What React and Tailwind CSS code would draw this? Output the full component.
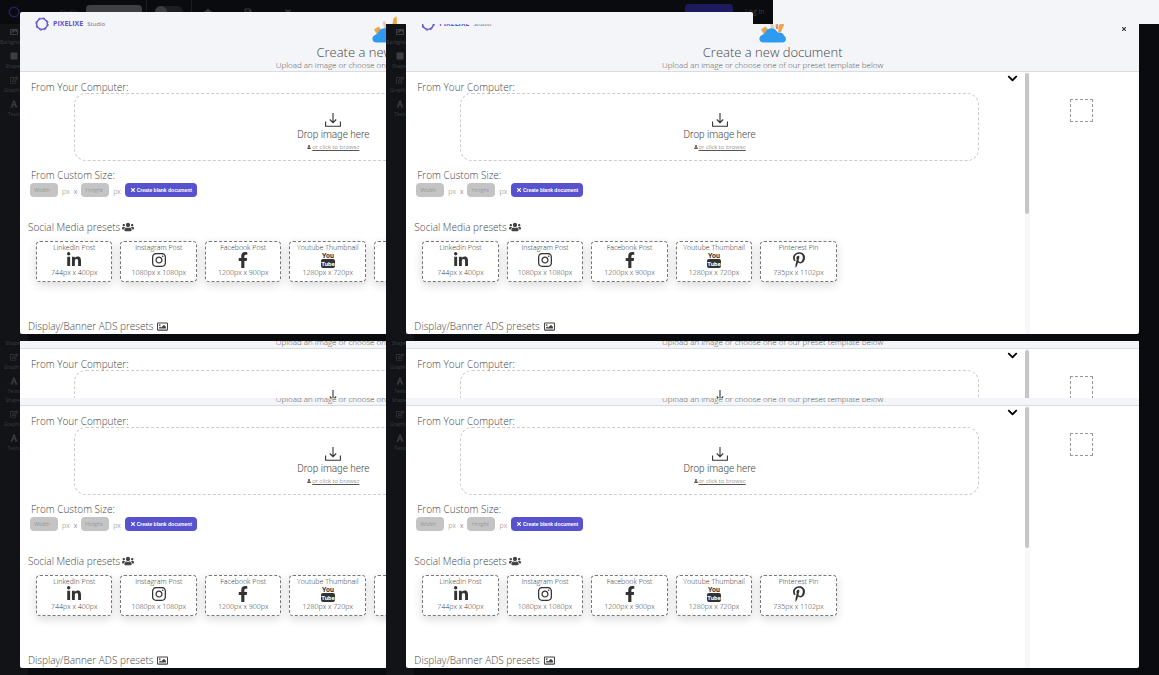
import React from "react";
import {
  FaChevronDown,
  FaFacebookF,
  FaFont,
  FaImage,
  FaInstagram,
  FaLinkedinIn,
  FaPinterestP,
  FaRegEdit,
  FaRegImage,
  FaSave,
  FaSquare,
  FaStar,
  FaTimes,
  FaUser,
  FaUsers,
} from "react-icons/fa";

function YoutubeIcon({ className }) {
  return (
    <svg viewBox="0 0 16 16" className={className} fill="currentColor" aria-hidden="true">
      <text x="8" y="6" textAnchor="middle" fontSize="7" className="font-[Roboto] font-bold">
        You
      </text>
      <rect x="1" y="7" width="14" height="9" rx="2" />
      <text x="8" y="14" textAnchor="middle" fontSize="6" fill="#fff" className="font-[Roboto] font-bold">
        Tube
      </text>
    </svg>
  );
}

function LogoIcon({ className }) {
  return (
    <svg viewBox="0 0 14 14" className={className} fill="none" stroke="currentColor" aria-hidden="true">
      <circle cx="7" cy="7" r="5.4" strokeWidth="1.4" />
      <circle cx="7" cy="7" r="6.2" strokeWidth="1" strokeDasharray="2.4 2.47" />
    </svg>
  );
}

function CloudIcon() {
  return (
    <svg viewBox="0 0 28 28" className="h-7 w-7" aria-hidden="true">
      <path d="M2 14.5l4.5-3 3.5 4-5 4z" fill="#e8a54b" />
      <path d="M10.500 7l2.500-1 2.500 7-3 1z" fill="#d7cdbb" />
      <path d="M16.500 9.500l2.500-.5.5 5-2.500 0z" fill="#e08a62" />
      <path d="M21.500 3.500l3-2.500.5 9-3.500 8-2.500-1.500z" fill="#f0a548" />
      <path
        d="M4.500 27.500c-5 0-5.500-6.500-1-7.800 1.300-.5 2.200-1.200 3-2.700 2-4.500 8.500-4.800 10.700-1.500 1 1.600 2.200 2.300 3.800 2.200 2.500 0 3.500 1.300 4 3 3 1.300 2.500 6.800-1.500 6.800z"
        fill="#2f9bf0"
      />
    </svg>
  );
}

function DropIcon() {
  return (
    <svg viewBox="0 0 16 14" className="h-[14px] w-4" fill="none" stroke="#333" aria-hidden="true">
      <path d="M8 0v9.500M4.800 6.500L8 9.700l3.200-3.200M.6 8.500v4.700h14.800V8.500" strokeWidth="1.1" />
    </svg>
  );
}

const tools = [
  { label: "Background", Icon: FaImage },
  { label: "Shapes", Icon: FaSquare },
  { label: "Graphics", Icon: FaRegEdit },
  { label: "Texts", Icon: FaFont },
];

const presets = [
  { name: "LinkedIn Post", size: "744px x 400px", Icon: FaLinkedinIn },
  { name: "Instagram Post", size: "1080px x 1080px", Icon: FaInstagram },
  { name: "Facebook Post", size: "1200px x 900px", Icon: FaFacebookF },
  { name: "Youtube Thumbnail", size: "1280px x 720px", Icon: YoutubeIcon },
  { name: "Pinterest Pin", size: "735px x 1102px", Icon: FaPinterestP },
];

function Editor() {
  return (
    <div className="absolute inset-0 flex flex-col overflow-hidden bg-[#090b0e] text-[#3c3d41]">
      <div className="flex h-6 shrink-0 items-center gap-2 px-2 text-[6px]">
        <LogoIcon className="h-3 w-3 text-[#23205c]" />
        <span className="ml-8">Studio</span>
        <span className="h-[14px] w-14 rounded-sm bg-[#3e3f42]" />
        <span className="-ml-1 h-6 w-px bg-[#1d1e22]" />
        <span className="h-3 w-7 rounded-full bg-[#1d1e22]">
          <span className="block h-3 w-3 rounded-full bg-[#3c3d41]" />
        </span>
        <span className="h-6 w-px bg-[#1d1e22]" />
        <FaStar className="ml-1 h-2 w-2" />
        <FaSave className="ml-6 h-2 w-2" />
        <FaTimes className="ml-6 h-2 w-2" />
        <span className="ml-auto h-4 w-12 rounded-sm bg-[#1d1b5e]" />
        <span className="ml-1 text-[7px]">Log in</span>
      </div>
      <div className="flex w-7 flex-1 flex-col items-center bg-[#121316] pt-1">
        {tools.map(({ label, Icon }) => (
          <div key={label} className="flex h-6 shrink-0 flex-col items-center gap-[3px]">
            <Icon className="h-2 w-2 shrink-0" />
            <span className="text-[5px] leading-[6px]">{label}</span>
          </div>
        ))}
      </div>
    </div>
  );
}

function ModalHeader() {
  return (
    <header className="grid h-[60px] grid-cols-3 border-b border-[#d9dde3] bg-[#f4f5f8]">
      <div className="flex h-6 items-center gap-1 pl-[15px]">
        <LogoIcon className="h-[14px] w-[14px] text-[#5b55d0]" />
        <span className="text-[7px] font-bold text-[#5b55d0]">PIXELIXE</span>
        <span className="text-[6px] text-gray-500">Studio</span>
      </div>
      <div className="flex flex-col items-center whitespace-nowrap pt-[3px]">
        <CloudIcon />
        <h1 className="text-[13px] leading-[18px] font-light text-[#444]">Create a new document</h1>
        <p className="text-[8px] leading-[8px] font-light text-[#555]">
          Upload an image or choose one of our preset template below
        </p>
      </div>
      <div className="flex items-start justify-end pt-[14px] pr-3">
        <button type="button" aria-label="Close" className="text-[#333]">
          <FaTimes className="block h-[6px] w-[6px]" />
        </button>
      </div>
    </header>
  );
}

function DropZone() {
  return (
    <div className="pl-2">
      <button
        type="button"
        className="mx-auto flex h-[68px] w-[85%] flex-col items-center rounded-xl border border-dashed border-[#ccc] pt-[19px]"
      >
        <DropIcon />
        <span className="font-[Roboto] text-[10px] leading-4 text-[#444]">Drop image here</span>
        <span className="flex items-center gap-px text-[6px] leading-2 text-[#555]">
          <FaUser className="h-1 w-1" />
          <span className="underline">or click to browse</span>
        </span>
      </button>
    </div>
  );
}

function SizeInput({ label }) {
  return (
    <label className="flex items-center gap-1 text-[7px] text-[#777]">
      <input
        type="text"
        placeholder={label}
        aria-label={label}
        className="h-[14px] w-7 rounded-sm bg-[#c4c4c4] px-1 text-[6px] placeholder:text-[#808080]"
      />
      <span className="pt-1">px</span>
    </label>
  );
}

function PresetCard({ name, size, Icon }) {
  return (
    <button
      type="button"
      className="flex h-[41px] flex-col items-center whitespace-nowrap rounded-sm border border-dashed border-[#777] bg-white pt-0.5 text-[7px] leading-2 font-light text-[#333] shadow-[0_3px_10px_rgba(0,0,0,0.15)]"
    >
      <span>{name}</span>
      <Icon className="h-4 w-4 text-[#333]" />
      <span className="pt-px">{size}</span>
    </button>
  );
}

function ModalBody() {
  return (
    <div className="flex h-[262px] overflow-hidden bg-white">
      <main className="relative min-w-0 flex-1 text-[10px] leading-3 font-light text-[#444]">
        <button type="button" aria-label="Collapse" className="absolute top-px right-[7px] text-black">
          <FaChevronDown className="block h-[11px] w-[11px]" />
        </button>
        <h2 className="pt-[9px] pl-[11px]">From Your Computer:</h2>
        <DropZone />
        <h2 className="mt-2 pl-[11px]">From Custom Size:</h2>
        <div className="mt-px flex items-center gap-1 pl-[10px]">
          <SizeInput label="Width" />
          <span className="pt-1 text-[7px]">x</span>
          <SizeInput label="Height" />
          <button
            type="button"
            className="flex h-[14px] w-[72px] items-center justify-center gap-px whitespace-nowrap rounded-sm bg-[#5753d0] font-['Liberation_Sans',sans-serif] text-[5px] font-bold text-white"
          >
            <FaTimes className="h-[6px] w-[6px]" />
            Create blank document
          </button>
        </div>
        <h2 className="mt-[23px] flex items-center gap-0.5 pl-2">
          Social Media presets
          <FaUsers className="h-3 w-3" />
        </h2>
        <div className="mt-2 ml-4 grid w-[67%] grid-cols-5 gap-2">
          {presets.map((preset) => (
            <PresetCard key={preset.name} {...preset} />
          ))}
        </div>
        <h2 className="mt-[38px] flex items-center gap-1 pl-2">
          Display/Banner ADS presets
          <FaRegImage className="h-[11px] w-[11px]" />
        </h2>
      </main>
      <div className="w-[5px] bg-[#f8f8fa]">
        <div className="mt-px h-[141px] w-1 rounded-sm bg-[#c6c6c6]" />
      </div>
      <aside className="flex w-[109px] justify-center pt-[27px] pr-[6px]">
        <div className="h-[23px] w-[23px] border border-dashed border-[#999]" />
      </aside>
    </div>
  );
}

function Page({ className }) {
  return (
    <div className={`relative px-5 pt-3 pb-[7px] ${className}`}>
      <Editor />
      <section className="relative overflow-hidden rounded-xs">
        <ModalHeader />
        <ModalBody />
      </section>
    </div>
  );
}

// One band of the sheet: the page cropped on the left, whole on the right
function Band({ className, pageClassName }) {
  return (
    <div className={`flex overflow-hidden ${className}`}>
      <div className="w-1/3 overflow-hidden">
        <Page className={`w-[200%] ${pageClassName}`} />
      </div>
      <div className="w-2/3 overflow-hidden">
        <Page className={pageClassName} />
      </div>
    </div>
  );
}

export default function App() {
  return (
    <div className="min-h-screen overflow-hidden bg-[#090b0e] font-['Open_Sans',sans-serif]">
      <div className="flex h-6 overflow-hidden bg-[#f4f5f8]">
        <div className="w-2/3">
          <Page className="" />
        </div>
      </div>
      <Band className="h-[317px]" pageClassName="-mt-6" />
      <Band className="h-[57px]" pageClassName="-mt-16" />
      <Band className="" pageClassName="-mt-16" />
    </div>
  );
}
